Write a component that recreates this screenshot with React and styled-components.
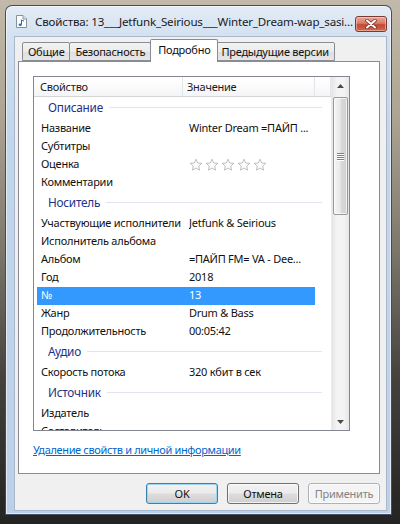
import styled, { createGlobalStyle } from "styled-components";

const GlobalStyle = createGlobalStyle`
  html, body {
    margin: 0;
    padding: 0;
  }
  body {
    width: 400px;
    height: 524px;
    overflow: hidden;
    background: linear-gradient(180deg, #c2b9aa 0%, #ada493 22%, #7c766b 48%, #45423e 72%, #232323 100%);
    font-family: "Noto Sans", "Open Sans", sans-serif;
    font-size: 11px;
    letter-spacing: -0.25px;
    color: #111;
  }
`

const Page = styled.div`
  box-sizing: border-box;
  width: 400px;
  height: 524px;
  padding: 5px 8px 9px 5px;
`

const Window = styled.div`
  box-sizing: border-box;
  width: 387px;
  height: 510px;
  display: flex;
  flex-direction: column;
  padding: 0 4px 3px 8px;
  border: 1px solid rgba(40, 52, 72, 0.85);
  border-radius: 7px 7px 0 0;
  background: linear-gradient(180deg, #e4ecf6 0%, #d3e1f0 30px, #c3d6eb 120px, #bcd1e9 100%);
  box-shadow: inset 0 0 0 1px rgba(255, 255, 255, 0.55);
`

const TitleBar = styled.div`
  height: 30px;
  display: flex;
  align-items: center;
  padding-left: 2px;
`

const TitleText = styled.div`
  flex: 1;
  margin-left: 8px;
  font-size: 11.6px;
  letter-spacing: -0.2px;
  color: #1b1b1b;
  white-space: nowrap;
  overflow: hidden;
`

const CloseButton = styled.div`
  width: 32px;
  height: 16px;
  margin-top: 6px;
  box-sizing: border-box;
  border: 1px solid #7a3a34;
  border-radius: 3px;
  background: linear-gradient(180deg, #e9a99b 0%, #d77a69 45%, #c5482f 55%, #cf6a4f 100%);
  box-shadow: inset 0 0 0 1px rgba(255, 220, 210, 0.5);
  display: flex;
  align-items: center;
  justify-content: center;
`

const Client = styled.div`
  flex: 1;
  display: flex;
  flex-direction: column;
  background: #f0f0f0;
  border: 1px solid #a8b8ca;
  padding: 0 6px 0 3px;
`

const TabRow = styled.div`
  height: 24px;
  display: flex;
  align-items: flex-end;
  padding-left: 4px;
  position: relative;
  z-index: 1;
`

const Tab = styled.div`
  box-sizing: border-box;
  height: ${p => (p.$active ? "23px" : "19px")};
  margin: ${p => (p.$active ? "0 -2px -1px -2px" : "0 0 0 0")};
  padding: ${p => (p.$active ? "2px 7px 0" : "1px 5px 0")};
  border: 1px solid #898c95;
  border-bottom: ${p => (p.$active ? "none" : "1px solid #898c95")};
  border-radius: 2px 2px 0 0;
  background: ${p => (p.$active ? "#fff" : "linear-gradient(180deg, #f3f3f3 0%, #ebebeb 50%, #dedede 51%, #e6e6e6 100%)")};
  position: relative;
  z-index: ${p => (p.$active ? 2 : 1)};
  white-space: nowrap;
  line-height: 16px;
  & + & {
    margin-left: ${p => (p.$active ? "-1px" : "1px")};
  }
`

const Panel = styled.div`
  flex: 1;
  display: flex;
  flex-direction: column;
  background: #fff;
  border: 1px solid #898c95;
  padding: 14px 0 0 14px;
`

const ListView = styled.div`
  width: 317px;
  height: 355px;
  box-sizing: border-box;
  border: 1px solid #828790;
  display: flex;
  background: #fff;
`

const ListBody = styled.div`
  flex: 1;
  overflow: hidden;
`

const Header = styled.div`
  height: 19px;
  display: grid;
  grid-template-columns: 149px 132px 1fr;
  background: linear-gradient(180deg, #ffffff 0%, #fbfbfc 50%, #f3f4f6 100%);
  border-bottom: 1px solid #d5d5d5;
`

const HeaderCell = styled.div`
  display: flex;
  align-items: center;
  padding-left: ${p => p.$pad}px;
  border-right: 1px solid #e3e5e8;
  color: #1a1a1a;
`

const Group = styled.div`
  height: 23px;
  box-sizing: border-box;
  display: flex;
  align-items: center;
  padding: 0 9px 3px 14px;
  color: #1e3287;
  font-size: 11.8px;
  gap: 6px;
  &::after {
    content: "";
    flex: 1;
    height: 1px;
    background: #dfe4ee;
  }
`

const Row = styled.div`
  height: 18px;
  width: 278px;
  margin-left: 3px;
  display: grid;
  grid-template-columns: 152px 1fr;
  align-items: center;
  background: ${p => (p.$selected ? "#3399ff" : "transparent")};
  color: ${p => (p.$selected ? "#fff" : "#111")};
`

const Cell = styled.div`
  padding-left: ${p => p.$pad || 0}px;
  white-space: nowrap;
  overflow: hidden;
  display: flex;
  align-items: center;
  line-height: 16px;
  margin-top: -2px;
`

const Stars = styled.div`
  display: flex;
  gap: 2px;
  margin-top: 2px;
`

const ScrollBar = styled.div`
  width: 17px;
  display: flex;
  flex-direction: column;
  background: linear-gradient(90deg, #e6e6e6 0%, #f4f4f4 30%, #f4f4f4 70%, #e6e6e6 100%);
  border-left: 1px solid #eaeaea;
`

const Arrow = styled.div`
  height: 17px;
  display: flex;
  align-items: center;
  justify-content: center;
`

const Thumb = styled.div`
  height: 118px;
  margin: 3px 1px 0;
  box-sizing: border-box;
  border: 1px solid #979797;
  border-radius: 2px;
  background: linear-gradient(90deg, #f4f4f4 0%, #eaeaea 45%, #d9d9d9 55%, #d0d0d0 100%);
  box-shadow: inset 0 0 0 1px rgba(255, 255, 255, 0.7);
  display: flex;
  align-items: center;
  justify-content: center;
`

const Grip = styled.div`
  width: 7px;
  display: flex;
  flex-direction: column;
  gap: 1px;
  & > span {
    display: block;
    height: 1px;
    background: #7e7e7e;
    box-shadow: 0 1px 0 #fff;
  }
`

const Track = styled.div`
  flex: 1;
`

const Link = styled.div`
  margin-top: 11px;
  color: #0066cc;
  text-decoration: underline;
  letter-spacing: -0.35px;
`

const ButtonRow = styled.div`
  height: 36px;
  box-sizing: border-box;
  padding-top: 9px;
  display: flex;
  justify-content: flex-end;
  gap: 9px;
`

const Button = styled.div`
  width: 72px;
  height: 21px;
  box-sizing: border-box;
  border-radius: 3px;
  border: 1px solid ${p => (p.$default ? "#3c7fb1" : p.$disabled ? "#adb2b5" : "#707070")};
  background: ${p =>
    p.$disabled
      ? "#f4f4f4"
      : "linear-gradient(180deg, #f2f2f2 0%, #ebebeb 48%, #dddddd 52%, #cfcfcf 100%)"};
  box-shadow: ${p => (p.$default ? "inset 0 0 0 1px #9fd5f3" : "inset 0 0 0 1px rgba(255,255,255,0.7)")};
  color: ${p => (p.$disabled ? "#838383" : "#111")};
  display: flex;
  align-items: center;
  justify-content: center;
`

function StarIcon() {
  return (
    <svg width="14" height="14" viewBox="0 0 14 14">
      <path
        d="M7 1.2 L8.7 5 L12.8 5.3 L9.7 8 L10.6 12.2 L7 10 L3.4 12.2 L4.3 8 L1.2 5.3 L5.3 5 Z"
        fill="#fdfdfd"
        stroke="#b9b9b9"
        strokeWidth="0.9"
        strokeLinejoin="round"
      />
    </svg>
  )
}

function FileIcon() {
  return (
    <svg width="11" height="13" viewBox="0 0 11 13">
      <path d="M0.5 0.5 H7 L10.5 4 V12.5 H0.5 Z" fill="#fff" stroke="#8a9099" />
      <path d="M7 0.5 V4 H10.5" fill="#e8eaee" stroke="#8a9099" />
      <path d="M5.5 5 V9.5" stroke="#1f6fc0" strokeWidth="1" />
      <path d="M5.5 5 L8 6.2" stroke="#1f6fc0" strokeWidth="1" />
      <ellipse cx="4.2" cy="9.8" rx="1.6" ry="1.2" fill="#1f6fc0" />
    </svg>
  )
}

function CloseGlyph() {
  return (
    <svg width="14" height="10" viewBox="0 0 14 10">
      <path d="M3 1.5 L11 8.5 M11 1.5 L3 8.5" stroke="#6b2a24" strokeWidth="3.4" strokeLinecap="round" />
      <path d="M3 1.5 L11 8.5 M11 1.5 L3 8.5" stroke="#fff" strokeWidth="2" strokeLinecap="round" />
    </svg>
  )
}

function TriangleUp() {
  return (
    <svg width="7" height="4" viewBox="0 0 7 4">
      <path d="M0 4 L3.5 0 L7 4 Z" fill="#4d4d4d" />
    </svg>
  )
}

function TriangleDown() {
  return (
    <svg width="7" height="4" viewBox="0 0 7 4">
      <path d="M0 0 L3.5 4 L7 0 Z" fill="#4d4d4d" />
    </svg>
  )
}

const sections = [
  {
    title: "Описание",
    rows: [
      ["Название", "Winter Dream =ПАЙП ..."],
      ["Субтитры", ""],
      ["Оценка", "stars"],
      ["Комментарии", ""],
    ],
  },
  {
    title: "Носитель",
    rows: [
      ["Участвующие исполнители", "Jetfunk & Seirious"],
      ["Исполнитель альбома", ""],
      ["Альбом", "=ПАЙП FM= VA - Dee..."],
      ["Год", "2018"],
      ["№", "13", true],
      ["Жанр", "Drum & Bass"],
      ["Продолжительность", "00:05:42"],
    ],
  },
  {
    title: "Аудио",
    rows: [["Скорость потока", "320 кбит в сек"]],
  },
  {
    title: "Источник",
    rows: [
      ["Издатель", ""],
      ["Составитель", ""],
    ],
  },
]

export default function App() {
  return (
    <Page>
      <GlobalStyle />
      <Window>
        <TitleBar>
          <FileIcon />
          <TitleText>Свойства: 13___Jetfunk_Seirious___Winter_Dream-wap_sasi...</TitleText>
          <CloseButton>
            <CloseGlyph />
          </CloseButton>
        </TitleBar>
        <Client>
          <TabRow>
            <Tab>Общие</Tab>
            <Tab>Безопасность</Tab>
            <Tab $active>Подробно</Tab>
            <Tab>Предыдущие версии</Tab>
          </TabRow>
          <Panel>
            <ListView>
              <ListBody>
                <Header>
                  <HeaderCell $pad={6}>Свойство</HeaderCell>
                  <HeaderCell $pad={4}>Значение</HeaderCell>
                  <HeaderCell />
                </Header>
                {sections.map(section => (
                  <div key={section.title}>
                    <Group>{section.title}</Group>
                    {section.rows.map(([name, value, selected]) => (
                      <Row key={name} $selected={selected}>
                        <Cell $pad={4}>{name}</Cell>
                        <Cell>
                          {value === "stars" ? (
                            <Stars>
                              <StarIcon />
                              <StarIcon />
                              <StarIcon />
                              <StarIcon />
                              <StarIcon />
                            </Stars>
                          ) : (
                            value
                          )}
                        </Cell>
                      </Row>
                    ))}
                  </div>
                ))}
              </ListBody>
              <ScrollBar>
                <Arrow>
                  <TriangleUp />
                </Arrow>
                <Thumb>
                  <Grip>
                    <span />
                    <span />
                    <span />
                    <span />
                  </Grip>
                </Thumb>
                <Track />
                <Arrow>
                  <TriangleDown />
                </Arrow>
              </ScrollBar>
            </ListView>
            <Link>Удаление свойств и личной информации</Link>
          </Panel>
          <ButtonRow>
            <Button $default>OK</Button>
            <Button>Отмена</Button>
            <Button $disabled>Применить</Button>
          </ButtonRow>
        </Client>
      </Window>
    </Page>
  )
}
